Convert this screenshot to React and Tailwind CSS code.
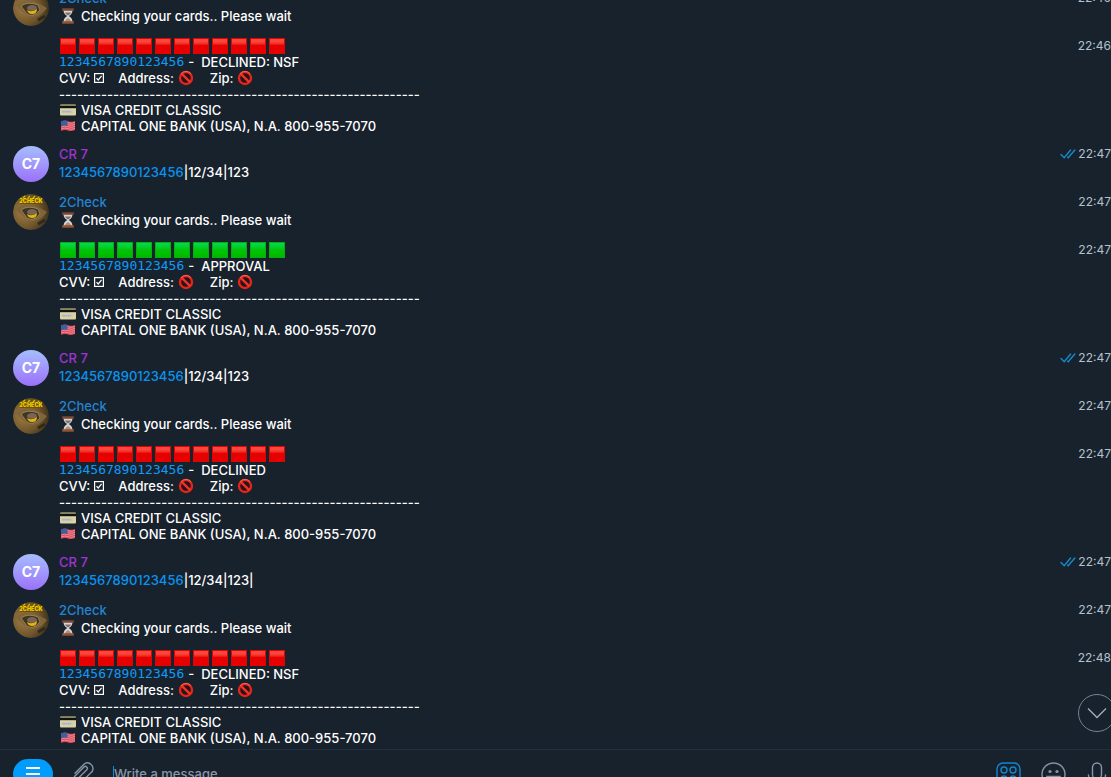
import { useState } from "react";

const PLACEHOLDER_CARD = "1234567890123456";

const exchanges = [
    { id: 1, status: "DECLINED: NSF", approved: false, botTime: "22:46", resultTime: "22:46" },
    { id: 2, request: "|12/34|123", status: "APPROVAL", approved: true, sentTime: "22:47", botTime: "22:47", resultTime: "22:47" },
    { id: 3, request: "|12/34|123", status: "DECLINED", approved: false, sentTime: "22:47", botTime: "22:47", resultTime: "22:47" },
    { id: 4, request: "|12/34|123|", status: "DECLINED: NSF", approved: false, sentTime: "22:47", botTime: "22:47", resultTime: "22:48" },
];

function Hourglass() {
    return (
        <svg viewBox="0 0 18 16" className="w-[18px] h-4 shrink-0" aria-hidden="true">
            <path d="M4.5 2 L13.5 2 Q13.5 6 9.8 8 Q13.5 10 13.5 14 L4.5 14 Q4.5 10 8.2 8 Q4.5 6 4.5 2Z" fill="#cfd6da" />
            <path d="M6 4.5 L12 4.5 Q11.5 6 9 7.5 Q6.5 6 6 4.5Z" fill="#8a6a58" />
            <path d="M9 10 Q12 12 12.5 14 L5.5 14 Q6 12 9 10Z" fill="#b98a6c" />
            <rect x="3" y="0.2" width="12" height="2.5" rx="0.8" fill="#7c4630" />
            <rect x="3" y="13.3" width="12" height="2.5" rx="0.8" fill="#8f5236" />
        </svg>
    );
}

function BankCard() {
    return (
        <svg viewBox="0 0 18 16" className="w-[18px] h-4 shrink-0" aria-hidden="true">
            <rect x="1" y="2.6" width="16" height="11" rx="1" fill="#d9d3a2" />
            <rect x="1" y="3.6" width="16" height="2.6" fill="#11130f" />
            <rect x="2.5" y="8" width="11" height="3" fill="#c6c8cc" />
            <path d="M3.5 9.8 H12.5" stroke="#8f949c" strokeWidth="0.8" strokeDasharray="1.2 0.6" />
        </svg>
    );
}

function UsFlag() {
    return (
        <svg viewBox="0 0 18 16" className="w-[18px] h-4 shrink-0" aria-hidden="true">
            <path d="M2 3.5 Q6 1.8 9 3.2 T16 3 V12 Q12 13.6 9 12.4 T2 12.8Z" fill="#e04758" />
            <g fill="none" stroke="#efb9c0" strokeWidth="0.6">
                <path d="M2 5 Q6 3.3 9 4.7 T16 4.5" />
                <path d="M2 7 Q6 5.3 9 6.7 T16 6.5" />
                <path d="M2 9 Q6 7.3 9 8.7 T16 8.5" />
                <path d="M2 11 Q6 9.3 9 10.7 T16 10.5" />
            </g>
            <path d="M2 3.5 Q5.5 2 8.5 3 V8 Q5.5 7 2 8.5Z" fill="#3c5f9e" />
        </svg>
    );
}

function Prohibited() {
    return (
        <svg viewBox="0 0 16 16" className="w-4 h-4 shrink-0" aria-hidden="true">
            <circle cx="8" cy="8" r="6" fill="#2b1219" stroke="#e3251a" strokeWidth="2.4" />
            <path d="M3.8 3.8 L12.2 12.2" stroke="#ee3427" strokeWidth="2.4" />
            <path d="M3 3.8 A6.5 6.5 0 0 1 13 3.8" fill="none" stroke="#ff7566" strokeWidth="0.8" />
        </svg>
    );
}

function CheckedBox() {
    return (
        <svg viewBox="0 0 10 10" className="w-[10px] h-[10px] shrink-0" aria-hidden="true">
            <rect x="0.6" y="0.6" width="8.8" height="8.8" fill="none" stroke="#fff" strokeWidth="1.2" />
            <path d="M2.5 5.2 L4.2 7 L7.6 2.8" fill="none" stroke="#fff" strokeWidth="1.2" />
        </svg>
    );
}

function ReadTicks() {
    return (
        <svg viewBox="0 0 16 10" className="w-4 h-[10px]" fill="none" stroke="#168acd" strokeWidth="1.4" strokeLinecap="round" aria-hidden="true">
            <path d="M1 5.5 L4.2 8.8 L10.6 1" />
            <path d="M7.6 8.2 L8.2 8.8 L14.8 1" />
        </svg>
    );
}

function BotAvatar() {
    return (
        <svg viewBox="0 0 36 36" className="w-9 h-9 rounded-full shrink-0" aria-hidden="true">
            <defs>
                <radialGradient id="bronze" cx="0.3" cy="0.5" r="0.75">
                    <stop offset="0" stopColor="#a17b42" />
                    <stop offset="0.6" stopColor="#6e552c" />
                    <stop offset="1" stopColor="#362d1c" />
                </radialGradient>
            </defs>
            <circle cx="18" cy="18" r="18" fill="url(#bronze)" />
            <path d="M3 15 Q12 8 20 11 T34 18 Q27 28 18 27 Q9 23 3 15Z" fill="#80643a" />
            <path d="M8 16 Q15 11 25 15 L27 20 Q20 28 14 24Z" fill="#40351f" stroke="#a48d62" strokeWidth="0.8" />
            <ellipse cx="19" cy="18" rx="5" ry="3" fill="#786557" />
            <path d="M14 20 Q19 23 24 19 Q24 24 19 24 Q15 24 14 20Z" fill="#e3b60e" />
            <path d="M25 30 L32 26" stroke="#332918" strokeWidth="3" />
            <rect x="7" y="2" width="22" height="8" fill="#685310" />
            <path d="M10 4 L12 2 M15 4 L17 2 M20 4 L22 2 M25 4 L26 3" stroke="#d8b50b" strokeWidth="1.4" />
            <text x="18" y="9" textAnchor="middle" fontFamily="Inter, sans-serif" fontSize="5.500" fontWeight="900" fill="#f1cb00">2CHECK</text>
        </svg>
    );
}

function CardLink({ mono }) {
    return (
        <a href="#card" className={mono ? "font-['DejaVu_Sans_Mono',monospace] font-normal text-[#0e9bf8]" : "text-[#0a93ee]"}>
            {PLACEHOLDER_CARD}
        </a>
    );
}

function Time({ children, read }) {
    return (
        <div className="ml-auto flex items-center gap-[2px] text-xs leading-4 font-normal text-[#b3c2d0]">
            {read && <ReadTicks />}
            <time>{children}</time>
        </div>
    );
}

function UserMessage({ request, time }) {
    return (
        <article className="flex gap-[10px]">
            <div className="w-9 h-9 shrink-0 rounded-full bg-linear-to-b from-[#a4bdfd] to-[#9b70fa] flex items-center justify-center text-sm font-bold">
                C7
            </div>
            <div className="flex-1">
                <div className="flex mb-[2px]">
                    <span className="text-[#a034d4]">CR 7</span>
                    <Time read>{time}</Time>
                </div>
                <p>
                    <CardLink />
                    {request}
                </p>
            </div>
        </article>
    );
}

function BotMessage({ status, approved, botTime, resultTime }) {
    return (
        <article className="flex gap-[10px]">
            <BotAvatar />
            <div className="flex-1">
                <div className="flex mb-[2px]">
                    <span className="text-[#2484d0]">2Check</span>
                    <Time>{botTime}</Time>
                </div>
                <p className="flex gap-1">
                    <Hourglass />
                    Checking your cards.. Please wait
                </p>
                <div className="mt-[14px] flex">
                    <div className="flex gap-[3px] pl-px">
                        {Array.from({ length: 12 }, (_, i) => (
                            <span
                                key={i}
                                className={
                                    approved
                                        ? "w-4 h-4 border border-[#04b010] bg-linear-to-b from-[#08d94b] via-[#00c503] to-[#00b900]"
                                        : "w-4 h-4 border border-[#e00505] bg-linear-to-b from-[#fb463c] from-20% to-[#e60000] to-45%"
                                }
                            />
                        ))}
                    </div>
                    <Time>{resultTime}</Time>
                </div>
                <p className="flex gap-1">
                    <CardLink mono />
                    <span className="whitespace-pre">{"-  " + status}</span>
                </p>
                <p className="flex items-center">
                    CVV:
                    <span className="ml-1 mr-[14px]"><CheckedBox /></span>
                    Address:
                    <span className="ml-1 mr-4"><Prohibited /></span>
                    Zip:
                    <span className="ml-1"><Prohibited /></span>
                </p>
                <p>{"-".repeat(60)}</p>
                <p className="flex gap-1">
                    <BankCard />
                    VISA CREDIT CLASSIC
                </p>
                <p className="flex gap-1">
                    <UsFlag />
                    CAPITAL ONE BANK (USA), N.A. 800-955-7070
                </p>
            </div>
        </article>
    );
}

function Composer() {
    const [message, setMessage] = useState("");

    return (
        <footer className="h-7 shrink-0 overflow-hidden border-t border-[#213040]">
            <div className="h-12 flex items-center pl-[13px] pr-[3px] text-[#8496a8]">
                <button aria-label="Menu" className="w-10 h-[30px] rounded-full bg-[#009dff] flex flex-col items-center justify-center gap-1">
                    <span className="w-[14px] h-[2px] bg-white" />
                    <span className="w-[14px] h-[2px] bg-white" />
                    <span className="w-[14px] h-[2px] bg-white" />
                </button>
                <button aria-label="Attach" className="ml-[18px]">
                    <svg viewBox="0 0 24 24" className="w-6 h-6" fill="none" stroke="currentColor" strokeWidth="1.4" strokeLinecap="round">
                        <path d="M8 15.5 L15.8 7.7 A1.9 1.9 0 0 0 13 5 L4 14 A4.5 4.5 0 0 0 10.3 20.3 L19.6 11 A5.2 5.2 0 0 0 20 2.5 A4.7 4.7 0 0 0 13 2.2 L4 11.2" />
                    </svg>
                </button>
                <div className="ml-[18px] flex-1 flex items-center">
                    <span className="w-px h-4 bg-[#168acd]" />
                    <input
                        aria-label="Message"
                        value={message}
                        onChange={(e) => setMessage(e.target.value)}
                        placeholder="Write a message..."
                        className="w-full bg-transparent outline-none placeholder:text-[#8797a7]"
                    />
                </div>
                <div className="flex items-center gap-5">
                    <button aria-label="Bot keyboard">
                        <svg viewBox="0 0 25 25" className="w-[25px] h-[25px]" fill="none" stroke="#1185d3" strokeWidth="1.4">
                            <rect x="1" y="1" width="23" height="23" rx="6" />
                            <circle cx="8" cy="8" r="3" />
                            <circle cx="17" cy="8" r="3" />
                            <circle cx="8" cy="17" r="3" />
                            <circle cx="17" cy="17" r="3" />
                        </svg>
                    </button>
                    <button aria-label="Emoji">
                        <svg viewBox="0 0 25 25" className="w-[25px] h-[25px]" fill="none" stroke="currentColor" strokeWidth="1.4">
                            <circle cx="12.5" cy="12.5" r="11.5" />
                            <circle cx="9" cy="9.5" r="1.6" fill="currentColor" stroke="none" />
                            <circle cx="16" cy="9.5" r="1.6" fill="currentColor" stroke="none" />
                            <path d="M6 14.5 H19 Q17.5 20 12.5 20 T6 14.5Z" />
                        </svg>
                    </button>
                    <button aria-label="Record voice message">
                        <svg viewBox="0 0 22 25" className="w-[22px] h-[25px]" fill="none" stroke="currentColor" strokeWidth="1.4" strokeLinecap="round">
                            <rect x="6.5" y="1" width="9" height="16" rx="4.5" />
                            <path d="M2.5 13 A8.5 8.5 0 0 0 19.5 13 M11 21.5 V24" />
                        </svg>
                    </button>
                </div>
            </div>
        </footer>
    );
}

export default function App() {
    return (
        <div className="h-screen overflow-hidden flex flex-col bg-[#18222d] text-white font-[Inter,sans-serif] text-[13px] leading-4 font-medium">
            <main className="relative flex-1 min-h-0 overflow-hidden flex flex-col justify-end">
                <div className="flex flex-col gap-3 pl-[13px] pb-[3px]">
                    {exchanges.map((item) => (
                        <section key={item.id} className="flex flex-col gap-3">
                            {item.request && <UserMessage request={item.request} time={item.sentTime} />}
                            <BotMessage {...item} />
                        </section>
                    ))}
                </div>

                {/* Scroll to bottom */}
                <button
                    aria-label="Scroll to bottom"
                    className="absolute -right-[5px] bottom-[17px] w-[38px] h-[38px] rounded-full border border-[#748493] bg-[#18222d] text-[#a1b0be] flex items-center justify-center"
                >
                    <svg viewBox="0 0 20 12" className="w-5 h-3" fill="none" stroke="currentColor" strokeWidth="1.3">
                        <path d="M1 1.5 L10 10.5 L19 1.5" />
                    </svg>
                </button>
            </main>
            <Composer />
        </div>
    );
}
